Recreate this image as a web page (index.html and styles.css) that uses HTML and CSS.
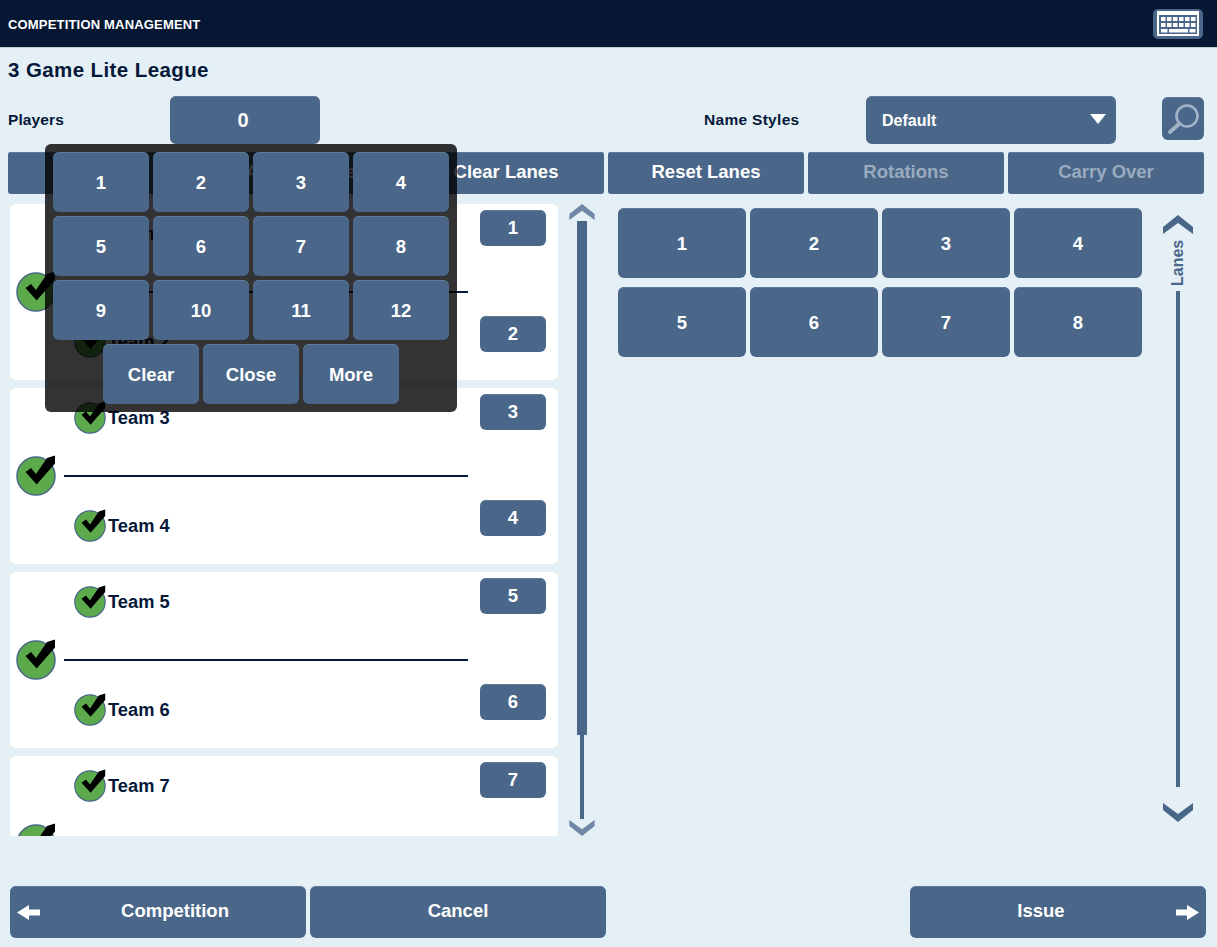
FILE: index.html
```html
<!DOCTYPE html>
<html lang="en">
<head>
<meta charset="utf-8">
<title>Competition Management</title>
<link rel="stylesheet" href="styles.css">
</head>
<body>
<svg class="defs" width="0" height="0" aria-hidden="true">
  <symbol id="check" viewBox="0 0 40 40" overflow="visible">
    <circle cx="20" cy="20" r="19" fill="#5caa4c" stroke="#4a6789" stroke-width="1.5"/>
    <path d="M9.500 16 15 12 20 18 31 2 39-.5V7.500L20.700 28.500Z" fill="#000"/>
  </symbol>
  <symbol id="chev-up" viewBox="0 0 30 19">
    <path d="M15 0 30 12V19L15 8 0 19V12Z"/>
  </symbol>
  <symbol id="chev-down" viewBox="0 0 30 19">
    <path d="M15 19 30 7V0L15 11 0 0V7Z"/>
  </symbol>
</svg>
<div class="page">
  <header class="topbar">
    <span class="topbar-title">COMPETITION MANAGEMENT</span>
    <button class="keyboard" aria-label="Keyboard">
      <svg width="42" height="25" viewBox="0 0 42 25">
        <rect width="42" height="25" fill="#fff"/>
        <rect x="2" y="4" width="38" height="19" fill="#4a6789"/>
        <g fill="#fff">
          <rect x="4" y="6" width="4.500" height="4"/><rect x="10" y="6" width="4.500" height="4"/><rect x="16" y="6" width="4.500" height="4"/><rect x="22" y="6" width="4.500" height="4"/><rect x="28" y="6" width="4.500" height="4"/><rect x="34" y="6" width="4.500" height="4"/>
          <rect x="4" y="12" width="4.500" height="4"/><rect x="10" y="12" width="4.500" height="4"/><rect x="16" y="12" width="4.500" height="4"/><rect x="22" y="12" width="4.500" height="4"/><rect x="28" y="12" width="4.500" height="4"/><rect x="34" y="12" width="4.500" height="4"/>
          <rect x="4" y="18" width="6.500" height="3.500"/><rect x="12" y="18" width="19" height="3.500"/><rect x="32.500" y="18" width="6" height="3.500"/>
        </g>
      </svg>
    </button>
  </header>

  <h1 class="title">3 Game Lite League</h1>

  <div class="controls">
    <span class="label players-label">Players</span>
    <button class="btn players-value">0</button>
    <span class="label styles-label">Name Styles</span>
    <button class="btn select"><span class="select-text">Default</span><i class="select-arrow"></i></button>
    <button class="btn search" aria-label="Search">
      <svg width="32" height="32" viewBox="0 0 32 32" fill="none" stroke="#a3b3c7" stroke-linecap="round">
        <circle cx="20" cy="13" r="10.500" stroke-width="2.600"/>
        <path d="M12.500 20.500 3 29" stroke-width="4"/>
      </svg>
    </button>
  </div>

  <nav class="tabs">
    <button class="btn tab">Teams</button>
    <button class="btn tab">Assign Lanes</button>
    <button class="btn tab">Clear Lanes</button>
    <button class="btn tab">Reset Lanes</button>
    <button class="btn tab is-off">Rotations</button>
    <button class="btn tab is-off">Carry Over</button>
  </nav>

  <main class="main">
    <section class="list">
      <article class="card">
        <svg class="check-big"><use href="#check"/></svg>
        <div class="pair">
          <div class="team team-a"><svg class="check-small"><use href="#check"/></svg><span>Team 1</span></div>
          <hr class="rule">
          <div class="team team-b"><svg class="check-small"><use href="#check"/></svg><span>Team 2</span></div>
        </div>
        <div class="nums"><button class="btn num">1</button><button class="btn num">2</button></div>
      </article>
      <article class="card">
        <svg class="check-big"><use href="#check"/></svg>
        <div class="pair">
          <div class="team team-a"><svg class="check-small"><use href="#check"/></svg><span>Team 3</span></div>
          <hr class="rule">
          <div class="team team-b"><svg class="check-small"><use href="#check"/></svg><span>Team 4</span></div>
        </div>
        <div class="nums"><button class="btn num">3</button><button class="btn num">4</button></div>
      </article>
      <article class="card">
        <svg class="check-big"><use href="#check"/></svg>
        <div class="pair">
          <div class="team team-a"><svg class="check-small"><use href="#check"/></svg><span>Team 5</span></div>
          <hr class="rule">
          <div class="team team-b"><svg class="check-small"><use href="#check"/></svg><span>Team 6</span></div>
        </div>
        <div class="nums"><button class="btn num">5</button><button class="btn num">6</button></div>
      </article>
      <article class="card">
        <svg class="check-big"><use href="#check"/></svg>
        <div class="pair">
          <div class="team team-a"><svg class="check-small"><use href="#check"/></svg><span>Team 7</span></div>
          <hr class="rule">
          <div class="team team-b"><svg class="check-small"><use href="#check"/></svg><span>Team 8</span></div>
        </div>
        <div class="nums"><button class="btn num">7</button><button class="btn num">8</button></div>
      </article>
    </section>

    <div class="scroll-left">
      <svg class="chev-small"><use href="#chev-up"/></svg>
      <div class="thumb"></div>
      <div class="track"></div>
      <svg class="chev-small"><use href="#chev-down"/></svg>
    </div>

    <section class="lanes">
      <button class="btn lane">1</button><button class="btn lane">2</button><button class="btn lane">3</button><button class="btn lane">4</button>
      <button class="btn lane">5</button><button class="btn lane">6</button><button class="btn lane">7</button><button class="btn lane">8</button>
    </section>

    <div class="scroll-right">
      <svg class="chev-large"><use href="#chev-up"/></svg>
      <span class="scroll-label">Lanes</span>
      <div class="track-right"></div>
      <svg class="chev-large"><use href="#chev-down"/></svg>
    </div>
  </main>

  <footer class="footer">
    <button class="btn action">
      <svg class="arrow" viewBox="0 0 23 15"><path d="M0 7.500 12 0V4.500H23V10.500H12V15Z"/></svg>
      <span class="action-text">Competition</span>
    </button>
    <button class="btn action">Cancel</button>
    <button class="btn action action-next">
      <span class="action-text">Issue</span>
      <svg class="arrow" viewBox="0 0 23 15"><path d="M23 7.500 11 0V4.500H0V10.500H11V15Z"/></svg>
    </button>
  </footer>

  <div class="numpad">
    <button class="btn key">1</button><button class="btn key">2</button><button class="btn key">3</button><button class="btn key">4</button>
    <button class="btn key">5</button><button class="btn key">6</button><button class="btn key">7</button><button class="btn key">8</button>
    <button class="btn key">9</button><button class="btn key">10</button><button class="btn key">11</button><button class="btn key">12</button>
    <button class="btn key">Clear</button><button class="btn key">Close</button><button class="btn key">More</button>
  </div>
</div>
</body>
</html>
```
FILE: styles.css
```css
* { box-sizing: border-box; }
html, body { margin: 0; padding: 0; }
body {
  background: #e4f0f5;
  color: #05183a;
  font-family: "Liberation Sans", Arial, sans-serif;
  font-weight: bold;
  overflow: hidden;
}
.defs { position: absolute; }
.page {
  position: relative;
  width: 1217px;
  height: 947px;
  overflow: hidden;
  display: flex;
  flex-direction: column;
}

.btn {
  border: 0;
  margin: 0;
  padding: 0;
  background: #4a6789;
  color: #fff;
  font: bold 18.5px "Liberation Sans", Arial, sans-serif;
  border-radius: 6px;
  box-shadow: inset 0 1px 0 #5d7a9a;
  display: flex;
  align-items: center;
  justify-content: center;
}

.topbar {
  height: 48px;
  flex: none;
  background: #051733;
  border-bottom: 1px solid #c5cdd5;
  display: flex;
  align-items: center;
  padding: 1px 14px 0 8px;
  justify-content: space-between;
}
.topbar-title { color: #fff; font-size: 13px; letter-spacing: 0.18px; }
.keyboard {
  width: 50px;
  height: 30px;
  margin-top: -1px;
  padding: 0;
  border: 0;
  border-radius: 5px;
  background: #4a6789;
  display: flex;
  align-items: center;
  justify-content: center;
}

.title {
  margin: 0;
  height: 48px;
  flex: none;
  padding-left: 8px;
  font-size: 20.5px;
  letter-spacing: 0.4px;
  line-height: 44px;
}

.controls {
  height: 48px;
  flex: none;
  display: flex;
  align-items: center;
}
.label { font-size: 15.5px; }
.players-label { width: 162px; margin-left: 8px; letter-spacing: 0.1px; }
.players-value {
  width: 150px;
  height: 48px;
  padding-right: 4px;
  font-size: 20px;
}
.styles-label { width: 162px; margin-left: 384px; letter-spacing: 0.3px; }
.select {
  width: 250px;
  height: 48px;
  justify-content: space-between;
  padding: 0 10px 0 16px;
  font-size: 16px;
}
.select-text { padding-top: 2px; }
.select-arrow {
  width: 0;
  height: 0;
  border-left: 8px solid transparent;
  border-right: 8px solid transparent;
  border-top: 10px solid #fff;
  margin-top: -2px;
}
.search {
  width: 42px;
  height: 43px;
  margin-left: 46px;
  margin-top: -3px;
}

.tabs {
  flex: none;
  display: flex;
  gap: 4px;
  margin-top: 8px;
  padding-left: 8px;
}
.tab {
  width: 196px;
  height: 42px;
  border-radius: 3px;
  padding-bottom: 2px;
}
.is-off { color: #9aaabf; }

.main {
  flex: none;
  display: flex;
  align-items: flex-start;
  height: 632px;
  margin-top: 10px;
}

.list {
  width: 548px;
  height: 632px;
  margin-left: 10px;
  overflow: hidden;
  display: flex;
  flex-direction: column;
  gap: 8px;
}
.card {
  flex: none;
  height: 176px;
  background: #fff;
  border-radius: 6px;
  display: flex;
  padding-left: 6px;
}
.check-big {
  flex: none;
  width: 40px;
  height: 40px;
  margin-top: 68px;
  overflow: visible;
}
.pair {
  width: 404px;
  margin-left: 8px;
  padding-top: 14px;
}
.team {
  display: flex;
  align-items: center;
  gap: 2px;
  height: 32px;
  margin-left: 10px;
  font-size: 18.3px;
}
.check-small {
  flex: none;
  width: 32px;
  height: 32px;
  overflow: visible;
}
.rule {
  margin: 41px 0 33px;
  height: 2px;
  border: 0;
  background: #05183a;
}
.nums {
  width: 66px;
  margin-left: 12px;
  padding-top: 6px;
  display: flex;
  flex-direction: column;
  gap: 70px;
}
.num {
  height: 36px;
}

.scroll-left {
  flex: none;
  width: 26px;
  height: 632px;
  margin-left: 11px;
  display: flex;
  flex-direction: column;
  align-items: center;
}
.chev-small {
  flex: none;
  width: 26px;
  height: 16px;
  fill: #6f88a6;
}
.thumb {
  flex: none;
  width: 10px;
  height: 514px;
  margin-top: 1px;
  background: #4a6789;
}
.track {
  flex: none;
  width: 4px;
  height: 84px;
  margin-bottom: 1px;
  background: #4a6789;
}

.lanes {
  width: 524px;
  margin-left: 23px;
  margin-top: 4px;
  display: grid;
  grid-template-columns: repeat(4, 128px);
  grid-auto-rows: 70px;
  column-gap: 4px;
  row-gap: 9px;
}
.lane { padding-top: 2px; }

.scroll-right {
  flex: none;
  width: 30px;
  height: 607px;
  margin-left: 21px;
  margin-top: 11px;
  display: flex;
  flex-direction: column;
  align-items: center;
}
.chev-large {
  flex: none;
  width: 30px;
  height: 19px;
  fill: #4a6789;
}
.scroll-label {
  flex: none;
  height: 50px;
  margin-top: 4px;
  margin-bottom: 3px;
  color: #4a6789;
  font-size: 16px;
  line-height: 16px;
  writing-mode: vertical-rl;
  transform: rotate(180deg);
  text-align: center;
}
.track-right {
  flex: none;
  width: 4px;
  height: 496px;
  background: #4a6789;
}
.scroll-right .chev-large:last-child { margin-top: 16px; }

.footer {
  flex: none;
  display: flex;
  gap: 4px;
  margin-top: 50px;
  padding: 0 11px 0 10px;
}
.action {
  width: 296px;
  height: 52px;
  padding: 0 7px 2px;
}
.action-next { margin-left: auto; }
.action-text { flex: 1; text-align: center; }
.arrow {
  flex: none;
  width: 23px;
  height: 15px;
  margin-right: 11px;
  margin-top: 2px;
  fill: #fff;
}
.action-next .arrow { margin-right: 0; margin-left: 11px; }

.numpad {
  position: absolute;
  left: 45px;
  top: 144px;
  width: 412px;
  height: 268px;
  padding: 8px;
  background: rgba(0, 0, 0, 0.8);
  border-radius: 6px;
  display: flex;
  flex-wrap: wrap;
  justify-content: center;
  align-content: flex-start;
  gap: 4px;
}
.key {
  width: 96px;
  height: 60px;
  padding-top: 2px;
}
```
